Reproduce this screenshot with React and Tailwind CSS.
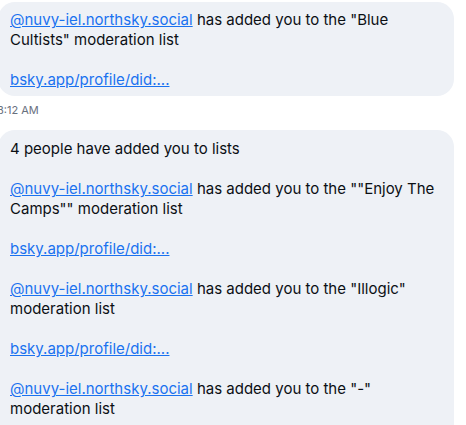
import React from 'react'

const Handle = () => (
  <a href="#" className="text-[#1a72f0] underline">
    @nuvy-iel.northsky.social
  </a>
)

const Link = () => (
  <a href="#" className="text-[#1a72f0] underline">
    bsky.app/profile/did:...
  </a>
)

const Added = ({ list }) => (
  <p>
    <Handle /> has added you to the "{list}" moderation list
  </p>
)

const App = () => {
  return (
    <div
      className="w-[466px] h-[425px] overflow-hidden bg-white text-[15px] leading-[20px] text-[#0b0f14]"
      style={{ fontFamily: 'Inter, "Noto Sans", sans-serif' }}
    >
      <div className="pt-[2px] -ml-[2px] mr-[12px]">
        {/* first message */}
        <div className="bg-[#eef1f6] rounded-[17px] pl-[12px] pr-[12px] pt-[8px] pb-[6px] space-y-[20px]">
          <p>
            <Handle /> has added you to the "Blue Cultists" moderation list
          </p>
          <p>
            <Link />
          </p>
        </div>
        <div className="text-[11px] leading-[14px] text-[#68707e] mt-[7px] ml-[-1px]">8:12 AM</div>

        {/* grouped message */}
        <div className="mt-[13px] bg-[#eef1f6] rounded-[17px] pl-[12px] pr-[12px] pt-[9px] pb-[8px] space-y-[20px]">
          <p>4 people have added you to lists</p>
          <Added list={'"Enjoy The Camps"'} />
          <p>
            <Link />
          </p>
          <Added list="Illogic" />
          <p>
            <Link />
          </p>
          <Added list="-" />
          <p>
            <Link />
          </p>
        </div>
      </div>
    </div>
  )
}

export default App
